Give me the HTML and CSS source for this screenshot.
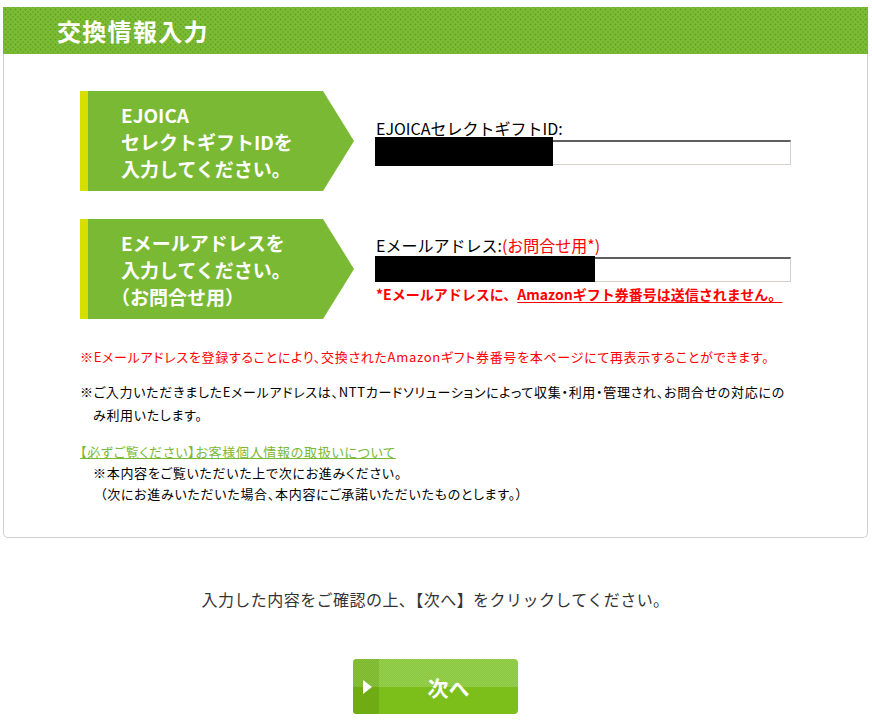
FILE: index.html
```html
<!DOCTYPE html>
<html lang="ja">
<head>
<meta charset="utf-8">
<title>交換情報入力</title>
<link rel="stylesheet" href="styles.css">
</head>
<body>
<div class="page">
  <h1 class="panel-title">交換情報入力</h1>
  <div class="panel-body">
    <div class="field-row">
      <div class="tag"><p class="tag-text">EJOICA<br>セレクトギフトIDを<br>入力してください。</p></div>
      <div class="field">
        <label class="field-label">EJOICAセレクトギフトID:</label>
        <div class="input-wrap">
          <input class="text-input" type="text">
          <div class="redact redact-id"></div>
        </div>
      </div>
    </div>
    <div class="field-row">
      <div class="tag"><p class="tag-text">Eメールアドレスを<br>入力してください。<br><span class="paren">（お問合せ用）</span></p></div>
      <div class="field">
        <label class="field-label">Eメールアドレス:<span class="req">(お問合せ用*)</span></label>
        <div class="input-wrap">
          <input class="text-input" type="text">
          <div class="redact redact-mail"></div>
        </div>
        <p class="field-note">*Eメールアドレスに、<u>Amazonギフト券番号は送信されません。</u></p>
      </div>
    </div>
    <div class="notes">
      <p class="note-red">※Eメールアドレスを登録することにより、交換されたAmazonギフト券番号を本ページにて再表示することができます。</p>
      <p class="note-black">※ご入力いただきましたEメールアドレスは、NTTカードソリューションによって収集・利用・管理され、お問合せの対応にの<br>み利用いたします。</p>
      <div class="privacy">
        <a class="privacy-link" href="#">【必ずご覧ください】お客様個人情報の取扱いについて</a>
        <p class="privacy-line">※本内容をご覧いただいた上で次にお進みください。</p>
        <p class="privacy-line privacy-line-paren">（次にお進みいただいた場合、本内容にご承諾いただいたものとします。）</p>
      </div>
    </div>
  </div>
  <p class="confirm">入力した内容をご確認の上、【次へ】をクリックしてください。</p>
  <a class="next-btn" href="#"><span class="next-arrow"><span class="tri"></span></span><span class="next-label">次へ</span></a>
</div>
</body>
</html>
```
FILE: styles.css
```css
body {
  margin: 0;
  background: #fff;
  font-family: "Noto Sans CJK JP", "Noto Sans", sans-serif;
  color: #000;
}
.page {
  width: 865px;
  margin-left: 3px;
  padding-top: 7px;
}
.panel-title {
  margin: 0;
  height: 47px;
  box-sizing: border-box;
  padding-left: 54px;
  font-size: 24px;
  line-height: 47px;
  font-weight: bold;
  letter-spacing: 1.3px;
  color: #fff;
  background-color: #7fbf34;
  background-image:
    radial-gradient(circle, #66a32a 0.9px, transparent 1.3px),
    radial-gradient(circle, #66a32a 0.9px, transparent 1.3px);
  background-size: 5px 5px;
  background-position: 0 0, 2.5px 2.5px;
}
.panel-body {
  border: 1px solid #cfcfcf;
  border-top: none;
  border-radius: 0 0 5px 5px;
  padding: 37px 0 33px 76px;
}
.field-row {
  display: flex;
  align-items: center;
  margin-bottom: 28px;
}
.tag {
  width: 274px;
  height: 100px;
  flex: none;
  display: flex;
  align-items: center;
  background: linear-gradient(to right, #d6df00 8px, #79b933 8px);
  clip-path: polygon(0 0, 243px 0, 274px 50%, 243px 100%, 0 100%);
}
.tag-text {
  margin: 0;
  padding-left: 41px;
  color: #fff;
  font-size: 19px;
  line-height: 27px;
  font-weight: bold;
}
.paren {
  margin-left: -10px;
}
.field {
  margin-left: 22px;
  width: 415px;
}
.field-label {
  display: block;
  font-size: 16px;
  line-height: 20px;
  margin-bottom: 2px;
}
.req {
  color: #f00;
}
.input-wrap {
  position: relative;
  height: 25px;
}
.text-input {
  display: block;
  width: 100%;
  height: 25px;
  box-sizing: border-box;
  margin: 0;
  border-top: 2px solid #5f5f5f;
  border-left: 2px solid #5f5f5f;
  border-right: 1px solid #d4d0c8;
  border-bottom: 1px solid #d4d0c8;
  background: #fff;
}
.redact {
  position: absolute;
  left: -1px;
  top: -3px;
  height: 29px;
  background: #000;
}
.redact-id { width: 178px; }
.redact-mail { width: 220px; top: -1px; height: 26px; }
.field-note {
  margin: 3px 0 0;
  font-size: 14px;
  line-height: 18px;
  font-weight: bold;
  color: #f00;
}
.field-note u {
  text-decoration-thickness: 1px;
  text-underline-offset: 2px;
}
.notes {
  font-size: 13px;
  font-feature-settings: "palt";
  letter-spacing: 0.7px;
}
.note-red {
  margin: 0;
  color: #f00;
  line-height: 20px;
}
.note-black {
  margin: 13px 0 0;
  line-height: 23px;
  padding-left: 13px;
  text-indent: -13px;
  white-space: nowrap;
}
.privacy {
  margin-top: 15px;
  line-height: 21px;
}
.privacy-link {
  display: block;
  color: #7ab933;
  text-decoration: underline;
}
.privacy-line {
  margin: 0;
  padding-left: 13px;
}
.privacy-line-paren {
  padding-left: 20px;
}
.confirm {
  margin: 49px 0 0;
  text-align: center;
  font-size: 16px;
  line-height: 24px;
  letter-spacing: 0.45px;
  color: #333;
}
.next-btn {
  display: flex;
  width: 165px;
  height: 55px;
  margin: 48px auto 0;
  border-radius: 4px;
  overflow: hidden;
  text-decoration: none;
  background:
    linear-gradient(#7cbe1a, #7cbe1a) 0 100% / 100% 50% no-repeat,
    repeating-conic-gradient(#8ac73c 0 25%, #97cf50 0 50%) 0 0 / 2px 2px;
}
.next-arrow {
  width: 26px;
  flex: none;
  display: flex;
  align-items: center;
  padding-left: 10px;
  box-sizing: border-box;
  background:
    linear-gradient(#6fab12, #6fab12) 0 100% / 100% 50% no-repeat,
    repeating-conic-gradient(#7cb82e 0 25%, #88c03e 0 50%) 0 0 / 2px 2px;
}
.tri {
  width: 0;
  height: 0;
  border-top: 7.5px solid transparent;
  border-bottom: 7.5px solid transparent;
  border-left: 9px solid #fff;
}
.next-label {
  flex: 1;
  display: flex;
  align-items: center;
  justify-content: center;
  color: #fff;
  font-size: 21px;
  font-weight: bold;
}
```
